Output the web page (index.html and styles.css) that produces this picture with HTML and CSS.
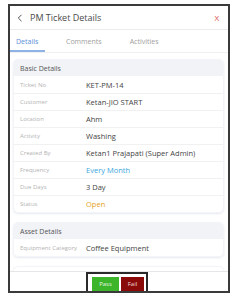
FILE: index.html
```html
<!DOCTYPE html>
<html lang="en">
<head>
  <meta charset="UTF-8" />
  <title>PM Ticket Details</title>
  <link rel="stylesheet" href="styles.css">
</head>
<body>
  <div class="modal">
    <div class="header">
      <svg class="back" width="6" height="8" viewBox="0 0 6 8">
        <path d="M4.5 0.8 L1.3 4 L4.5 7.2" fill="none" stroke="#555" stroke-width="1"/>
      </svg>
      <span class="title">PM Ticket Details</span>
      <span class="close">X</span>
    </div>

    <div class="tabs">
      <span class="tab active">Details</span>
      <span class="tab">Comments</span>
      <span class="tab">Activities</span>
    </div>

    <div class="content">
      <div class="card">
        <div class="card-head">Basic Details</div>
        <div class="row"><span class="label">Ticket No</span><span class="value">KET-PM-14</span></div>
        <div class="row"><span class="label">Customer</span><span class="value">Ketan-JIO START</span></div>
        <div class="row"><span class="label">Location</span><span class="value">Ahm</span></div>
        <div class="row"><span class="label">Activity</span><span class="value">Washing</span></div>
        <div class="row"><span class="label">Created By</span><span class="value">Ketan1 Prajapati (Super Admin)</span></div>
        <div class="row"><span class="label">Frequency</span><span class="value blue">Every Month</span></div>
        <div class="row"><span class="label">Due Days</span><span class="value">3 Day</span></div>
        <div class="row"><span class="label">Status</span><span class="value orange">Open</span></div>
      </div>

      <div class="card">
        <div class="card-head">Asset Details</div>
        <div class="row"><span class="label">Equipment Category</span><span class="value">Coffee Equipment</span></div>
      </div>

      <div class="card empty"></div>
    </div>

    <div class="footer">
      <div class="actions">
        <button class="btn pass">Pass</button>
        <button class="btn fail">Fail</button>
      </div>
    </div>
  </div>
</body>
</html>
```

FILE: styles.css
```css
* {
  box-sizing: border-box;
  font-family: 'Open Sans', 'Noto Sans', sans-serif;
}

body {
  margin: 0;
  background-color: #fff;
}

.modal {
  margin: 4px 0 0 8px;
  width: 222px;
  height: 289px;
  border: 2px solid #3a3a3a;
  display: flex;
  flex-direction: column;
  overflow: hidden;
  background-color: #fff;
}

.header {
  height: 24px;
  display: flex;
  align-items: center;
  padding: 0 9px 0 7px;
  border-bottom: 1px solid #ececec;
  flex-shrink: 0;
}

.back {
  margin-right: 7px;
}

.title {
  color: #4a4a4a;
  font-size: 9px;
  flex: 1;
}

.close {
  color: #d9534f;
  font-size: 8px;
}

.tabs {
  height: 23px;
  display: flex;
  align-items: stretch;
  border-bottom: 1px solid #f0f0f0;
  flex-shrink: 0;
}

.tab {
  font-size: 7px;
  color: #a0a0a0;
  display: flex;
  align-items: center;
}

.tab.active {
  color: #5b8ed8;
  border-bottom: 2px solid #8eb2e6;
  width: 35px;
  padding: 2px 0 0 6px;
  margin-right: 21px;
}

.tab:last-child {
  margin-left: 28px;
}

.content {
  flex: 1;
  overflow: hidden;
  padding: 6px 4px 0 3px;
  display: flex;
  flex-direction: column;
  gap: 9px;
}

.card {
  border-radius: 5px;
  box-shadow: 0 1px 2px rgba(150, 170, 200, 0.25);
  border: 1px solid #f2f4f8;
  overflow: hidden;
  flex-shrink: 0;
}

.card-head {
  background-color: #f2f3f7;
  font-size: 7px;
  color: #555;
  height: 16px;
  display: flex;
  align-items: center;
  padding-left: 6px;
}

.row {
  display: flex;
  align-items: center;
  height: 17px;
  border-top: 1px solid #f1f1f1;
}

.row:nth-child(2) {
  border-top: none;
}

.label {
  width: 72px;
  padding-left: 6px;
  font-size: 6px;
  color: #b3b3b3;
  white-space: nowrap;
}

.value {
  font-size: 7.5px;
  color: #444;
  white-space: nowrap;
}

.blue {
  color: #3aa6e0;
}

.orange {
  color: #e6a21d;
}

.card.empty {
  height: 30px;
}

.footer {
  height: 20px;
  border-top: 1px solid #e6e6e6;
  display: flex;
  justify-content: center;
  flex-shrink: 0;
}

.actions {
  border: 2px solid #2a2a2a;
  border-bottom: none;
  display: flex;
  gap: 2px;
  padding: 3px 2px 0 4px;
  margin-left: -4px;
}

.btn {
  border: none;
  border-radius: 0;
  color: #e6f4e4;
  font-size: 6px;
  height: 14px;
  padding: 0;
  cursor: pointer;
}

.pass {
  background-color: #3cb52a;
  width: 27px;
}

.fail {
  background-color: #8a0a0a;
  color: #f0d8d8;
  width: 23px;
}
```
